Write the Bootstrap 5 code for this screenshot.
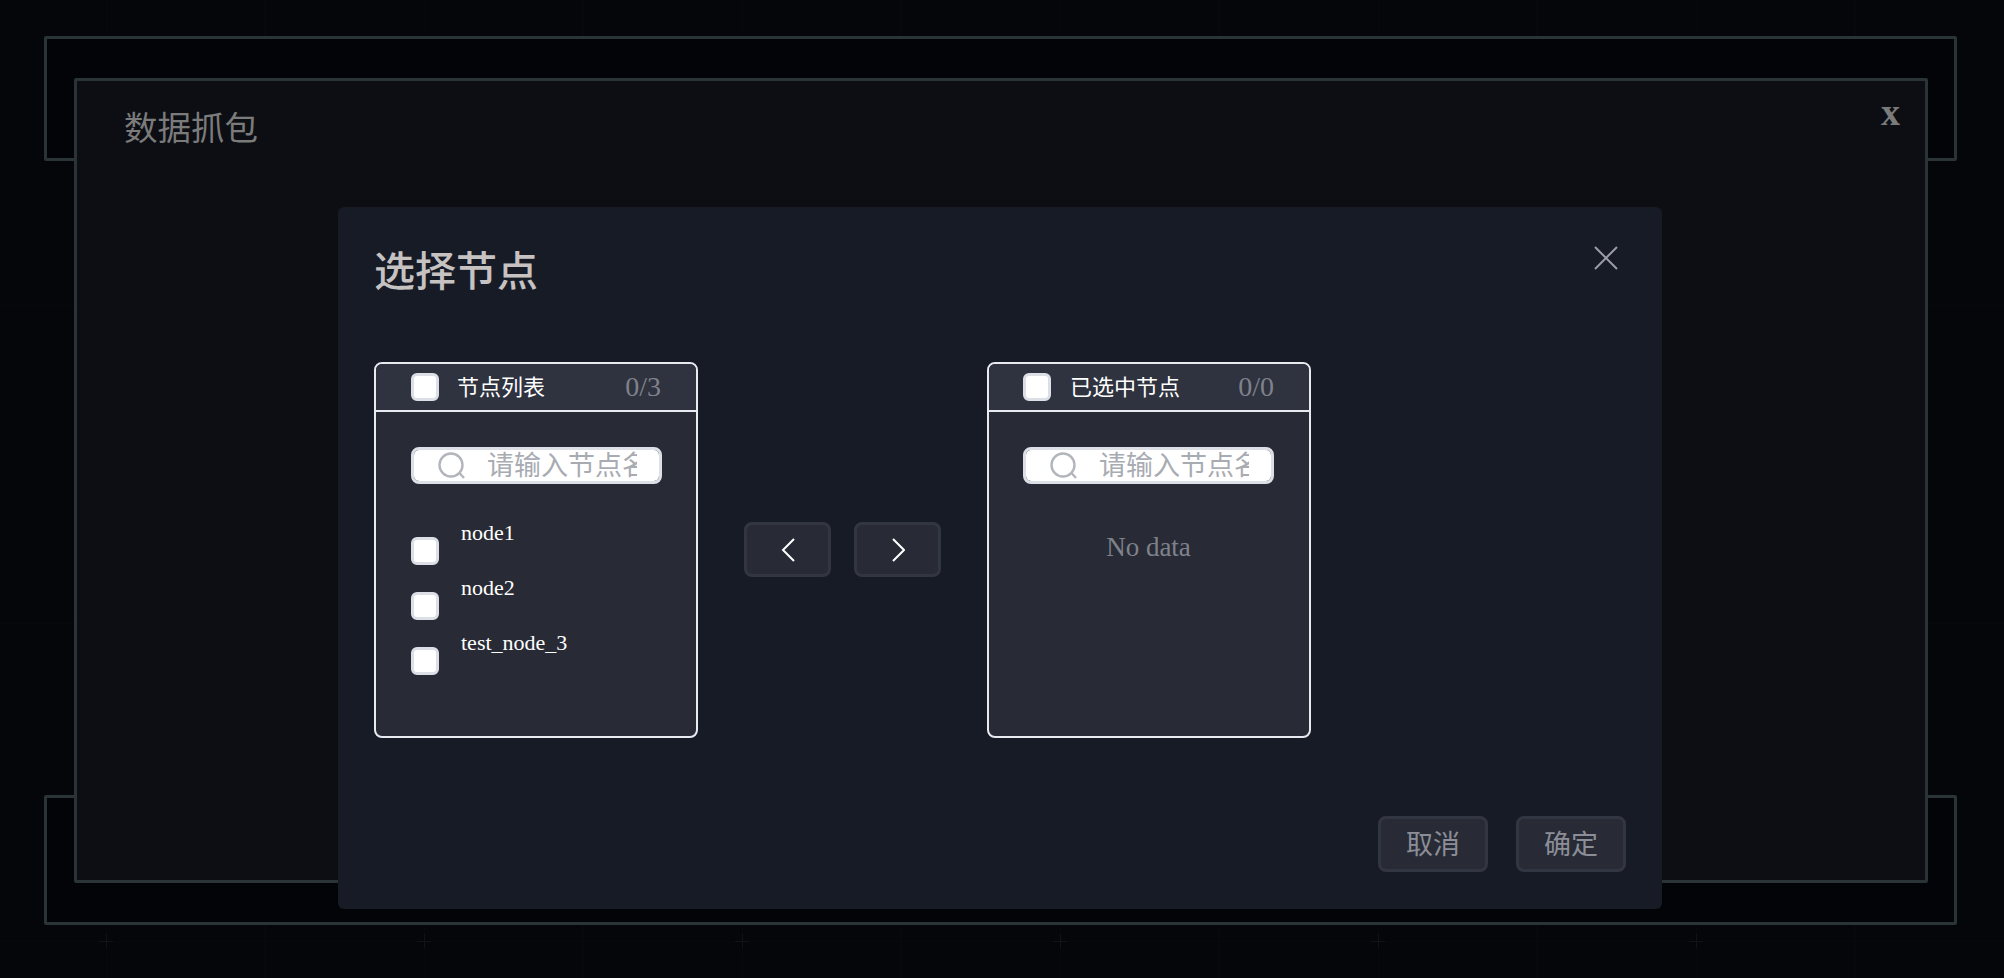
<!DOCTYPE html>
<html lang="zh-CN">
<head>
    <meta charset="UTF-8">
    <meta name="viewport" content="width=device-width, initial-scale=1">
    <title>数据抓包</title>
    <link href="https://cdn.jsdelivr.net/npm/bootstrap@5.3.0/dist/css/bootstrap.min.css" rel="stylesheet">
    <style>
        body {
            height: 978px;
            overflow: hidden;
            background-color: #050609;
            font-family: "Liberation Serif", "Noto Sans CJK SC", serif;
        }
        .bg-grid {
            position: absolute;
            inset: 0;
            width: 100%;
            height: 100%;
        }
        .deco-frame {
            position: absolute;
            left: 44px;
            width: 1913px;
            background-color: #030407;
            border: 3px solid #2a3336;
            border-radius: 2px;
        }
        .deco-top { top: 36px; height: 125px; }
        .deco-bottom { top: 795px; height: 130px; }

        .capture-panel {
            position: absolute;
            left: 74px;
            top: 78px;
            width: 1854px;
            height: 805px;
            padding: 29px 47px;
            background-color: #0c0e13;
            border: 3px solid #2a3336;
            border-radius: 2px;
            color: #7b7b7b;
        }
        .capture-title { font-size: 33.5px; line-height: 38px; }
        .capture-close {
            position: absolute;
            top: 11px;
            right: 25px;
            font-size: 38px;
            line-height: 40px;
            font-weight: 700;
        }

        .node-dialog {
            position: absolute;
            left: 338px;
            top: 207px;
            width: 1324px;
            height: 702px;
            background-color: #171b26;
            border: 0;
            border-radius: 6px;
        }
        .node-dialog .modal-header {
            height: 155px;
            padding: 37px 36px 0;
            border: 0;
            align-items: flex-start;
        }
        .node-dialog .modal-title {
            font-size: 41px;
            line-height: 56px;
            color: #c6c2c2;
        }
        .dialog-x { margin: 2px 8px 0 0; color: #9a9da5; }
        .node-dialog .modal-body { padding: 0 36px; flex: 0 0 376px; }

        .pick-box {
            width: 324px;
            height: 376px;
            background-color: #282b36;
            border: 2px solid #e8eaf0;
            border-radius: 8px;
            overflow: hidden;
        }
        .pick-head {
            height: 48px;
            padding: 0 35px;
            background-color: #2f323f;
            border-bottom: 2px solid #e8eaf0;
            color: #fff;
            font-size: 22px;
        }
        .pick-label { margin-left: 18px; }
        .pick-count { font-size: 28px; color: #7f828b; }
        .pick-body { padding: 35px 34px 0 35px; }
        .pick-box-right .pick-head { padding-left: 34px; }
        .pick-box-right .pick-label { margin-left: 19px; }
        .pick-box-right .pick-body { padding: 35px 35px 0 34px; }
        .node-check.form-check-input {
            flex: none;
            width: 28px;
            height: 28px;
            margin: 0;
            background-color: #fff;
            border: 3px solid #dcdfe6;
            border-radius: 6px;
        }
        .search-wrap { position: relative; height: 37px; margin-bottom: 36px; }
        .search-wrap svg { position: absolute; left: 27px; top: 5px; color: #b3b5bc; }
        .search-wrap .form-control {
            height: 37px;
            min-height: 0;
            padding: 2px 22px 0 73px;
            font-size: 27px;
            line-height: 31px;
            font-family: inherit;
            border: 3px solid #dcdfe6;
            border-radius: 8px;
        }
        .search-wrap .form-control::placeholder { color: #a8abb2; }
        .node-row { height: 55px; gap: 22px; color: #fff; font-size: 22px; line-height: 26px; }
        .node-row .node-check { margin-top: 17px; }
        .no-data { margin-top: 48px; font-size: 27px; line-height: 30px; color: #7f828b; text-align: center; }

        .move-btns { gap: 23px; margin: 0 46px 1px 46px; }
        .dark-btn.btn {
            padding: 0;
            background-color: #282b36;
            border: 3px solid #323643;
            border-radius: 8px;
            color: #8b8e97;
        }
        .move-btns .dark-btn { width: 87px; height: 55px; color: #fff; }
        .node-dialog .modal-footer {
            padding: 78px 36px 0;
            border: 0;
            gap: 28px;
        }
        .node-dialog .modal-footer .dark-btn { width: 110px; height: 56px; margin: 0; padding-top: 2px; font-size: 27px; }
    </style>
</head>
<body>
    <svg class="bg-grid" aria-hidden="true">
        <defs>
            <pattern id="gridCell" x="106" y="305" width="318" height="318" patternUnits="userSpaceOnUse">
                <path d="M0 0V318M159 0V318" stroke="#090a0e" fill="none"/>
                <path d="M0 0H318" stroke="#08090c" fill="none"/>
                <path d="M0 0H7M0 0V7M311 0H318M0 311V318" stroke="#111317" stroke-width="2" fill="none"/>
            </pattern>
        </defs>
        <rect width="100%" height="100%" fill="url(#gridCell)"/>
    </svg>

    <div class="deco-frame deco-top"></div>
    <div class="deco-frame deco-bottom"></div>

    <div class="capture-panel">
        <div class="capture-title">数据抓包</div>
        <div class="capture-close">x</div>
    </div>

    <div class="modal-content node-dialog">
        <div class="modal-header d-flex justify-content-between">
            <h5 class="modal-title">选择节点</h5>
            <svg class="dialog-x" width="24" height="24" viewBox="0 0 24 24" fill="none" stroke="currentColor" stroke-width="2">
                <path d="M1 1L23 23M23 1L1 23"/>
            </svg>
        </div>

        <div class="modal-body d-flex align-items-center">
            <div class="pick-box">
                <div class="pick-head d-flex align-items-center">
                    <input class="form-check-input node-check" type="checkbox" aria-label="全选">
                    <span class="pick-label">节点列表</span>
                    <span class="pick-count ms-auto">0/3</span>
                </div>
                <div class="pick-body">
                    <div class="search-wrap">
                        <input class="form-control" type="text" placeholder="请输入节点名称">
                        <svg width="28" height="28" viewBox="0 0 28 28" fill="none" stroke="currentColor" stroke-width="2.4">
                            <circle cx="13" cy="13" r="11.5"/>
                            <path d="M21.5 21L26 26"/>
                        </svg>
                    </div>
                    <div class="node-row d-flex align-items-start"><input class="form-check-input node-check" type="checkbox" aria-label="node1"><span>node1</span></div>
                    <div class="node-row d-flex align-items-start"><input class="form-check-input node-check" type="checkbox" aria-label="node2"><span>node2</span></div>
                    <div class="node-row d-flex align-items-start"><input class="form-check-input node-check" type="checkbox" aria-label="test_node_3"><span>test_node_3</span></div>
                </div>
            </div>

            <div class="move-btns d-flex">
                <button class="btn dark-btn" type="button" aria-label="移除">
                    <svg width="14" height="24" viewBox="0 0 14 24" fill="none" stroke="currentColor" stroke-width="2"><path d="M13 1L2 12L13 23"/></svg>
                </button>
                <button class="btn dark-btn" type="button" aria-label="添加">
                    <svg width="14" height="24" viewBox="0 0 14 24" fill="none" stroke="currentColor" stroke-width="2"><path d="M2 1L13 12L2 23"/></svg>
                </button>
            </div>

            <div class="pick-box pick-box-right">
                <div class="pick-head d-flex align-items-center">
                    <input class="form-check-input node-check" type="checkbox" aria-label="全选">
                    <span class="pick-label">已选中节点</span>
                    <span class="pick-count ms-auto">0/0</span>
                </div>
                <div class="pick-body">
                    <div class="search-wrap">
                        <input class="form-control" type="text" placeholder="请输入节点名称">
                        <svg width="28" height="28" viewBox="0 0 28 28" fill="none" stroke="currentColor" stroke-width="2.4">
                            <circle cx="13" cy="13" r="11.5"/>
                            <path d="M21.5 21L26 26"/>
                        </svg>
                    </div>
                    <div class="no-data">No data</div>
                </div>
            </div>
        </div>

        <div class="modal-footer d-flex justify-content-end">
            <button class="btn dark-btn" type="button">取消</button>
            <button class="btn dark-btn" type="button">确定</button>
        </div>
    </div>

    <script src="https://cdn.jsdelivr.net/npm/bootstrap@5.3.0/dist/js/bootstrap.bundle.min.js"></script>
</body>
</html>
